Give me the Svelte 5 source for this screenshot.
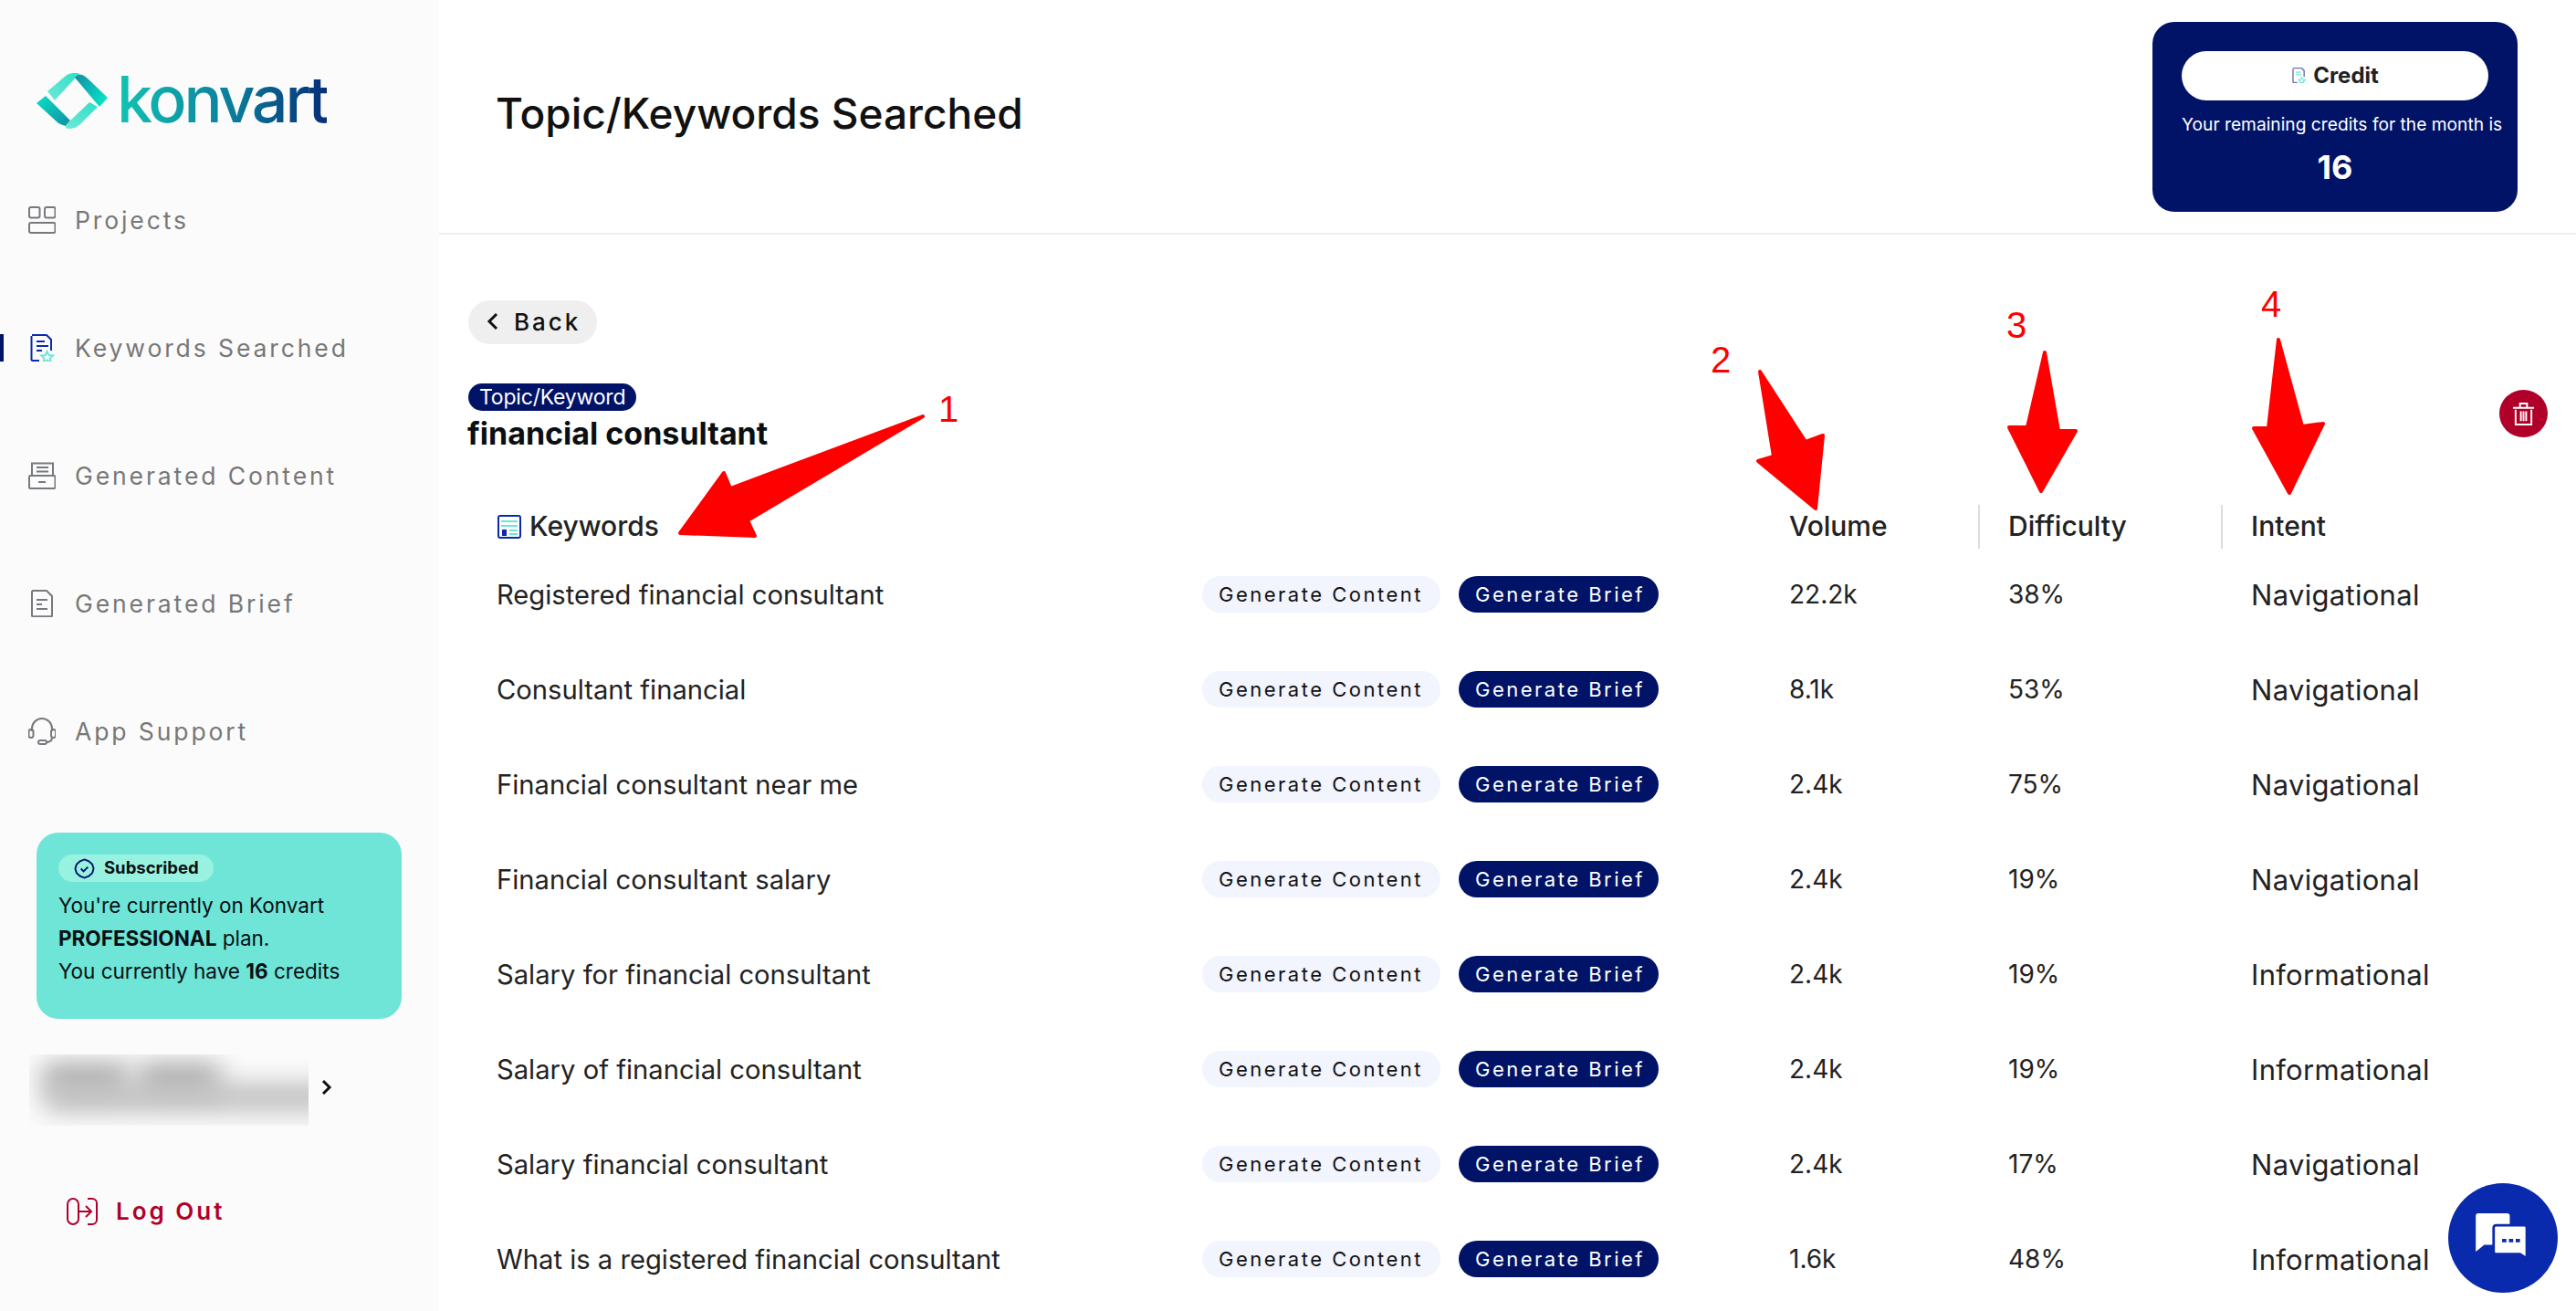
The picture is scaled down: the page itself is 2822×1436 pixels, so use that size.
<script>
  const rows = [
    ['Registered financial consultant', '22.2k', '38%', 'Navigational'],
    ['Consultant financial', '8.1k', '53%', 'Navigational'],
    ['Financial consultant near me', '2.4k', '75%', 'Navigational'],
    ['Financial consultant salary', '2.4k', '19%', 'Navigational'],
    ['Salary for financial consultant', '2.4k', '19%', 'Informational'],
    ['Salary of financial consultant', '2.4k', '19%', 'Informational'],
    ['Salary financial consultant', '2.4k', '17%', 'Navigational'],
    ['What is a registered financial consultant', '1.6k', '48%', 'Informational']
  ];
</script>

<div class="page">
  <aside class="side">
    <div class="logo">
      <svg class="mark" viewBox="40 80 78 62" width="78" height="62">
        <defs>
          <linearGradient id="ld1" x1="0" y1="0" x2="1" y2="0.6"><stop offset="0" stop-color="#0f8ea3"/><stop offset="1" stop-color="#0be0c6"/></linearGradient>
          <linearGradient id="ld2" x1="0" y1="0" x2="1" y2="1"><stop offset="0" stop-color="#0be0c6"/><stop offset="1" stop-color="#0f8ea3"/></linearGradient>
          <linearGradient id="ll" x1="0" y1="1" x2="1" y2="0"><stop offset="0" stop-color="#6fe8d6"/><stop offset="1" stop-color="#2fe0c8"/></linearGradient>
        </defs>
        <path d="M52 100 L72 83 Q78 79 84 80 L88 81 L82 86 L60 110 Z" fill="url(#ll)"/>
        <path d="M82 85 Q85 81 90 82 Q93 83 96 86 L118 107 L109 117 Z" fill="url(#ld1)"/>
        <path d="M40 113 L50 105 L77 132 L72 138 Q68 137 64 135 Z" fill="url(#ld2)"/>
        <path d="M98 112 L107 117 L88 136 Q80 143 72 140 L72 137 L77 132 Z" fill="url(#ll)"/>
      </svg>
      <span class="word">konvart</span>
    </div>

    <nav class="nav">
      <div class="item">
        <svg class="ico" viewBox="0 0 30 30"><g fill="none" stroke="#77797e" stroke-width="2"><rect x="1" y="1" width="11.500" height="11.500" rx="2"/><rect x="18" y="1" width="11.500" height="11.500" rx="2"/><rect x="1" y="18" width="28.500" height="11" rx="2"/></g></svg>
        <span>Projects</span>
      </div>
      <div class="item active">
        <svg class="ico" viewBox="0 0 30 30"><path d="M4 1h16l5 5v12M12 29H5a1.500 1.500 0 0 1-1.500-1.500V2" fill="none" stroke="#0a2aad" stroke-width="2"/><path d="M9 8h9M9 13h13M9 18h6" stroke="#0a2aad" stroke-width="2"/><path d="M20.500 19l2 4 4.500.5-3.300 3 1 4.300-4.200-2.300-4 2.300 1-4.300-3.300-3 4.500-.5z" fill="none" stroke="#6ee5d7" stroke-width="2"/></svg>
        <span>Keywords Searched</span>
      </div>
      <div class="item">
        <svg class="ico" viewBox="0 0 30 30"><g fill="none" stroke="#77797e" stroke-width="2"><path d="M4 15V1.500h23V15"/><rect x="1" y="15" width="28.500" height="14" rx="1.500"/><path d="M9 6h13M9 10.500h13M11 22h8"/></g></svg>
        <span>Generated Content</span>
      </div>
      <div class="item">
        <svg class="ico" viewBox="0 0 30 30"><g fill="none" stroke="#77797e" stroke-width="2"><path d="M5 1h15l6 6v21.500a.800.800 0 0 1-1 .8H5a1 1 0 0 1-1-1V2z"/><path d="M9 11h12M9 16h6M9 21h12"/></g></svg>
        <span>Generated Brief</span>
      </div>
      <div class="item">
        <svg class="ico" viewBox="0 0 30 30"><g fill="none" stroke="#77797e" stroke-width="2"><path d="M4 15v-3a11 11 0 0 1 22 0v3"/><rect x="0.500" y="13" width="5" height="9" rx="2.500"/><rect x="25" y="13" width="5" height="9" rx="2.500"/><path d="M26 22q0 5-7 5"/><rect x="11" y="25" width="9" height="4" rx="2"/></g></svg>
        <span>App Support</span>
      </div>
    </nav>

    <div class="plan">
      <div class="sub">
        <svg viewBox="0 0 24 24" width="23" height="23"><path d="M12 1.500l5 2 4 3.500 1.500 5-1.500 5-4 3.500-5 2-5-2-4-3.500-1.500-5 1.500-5 4-3.500z" fill="none" stroke="#011367" stroke-width="2"/><path d="M8 12l3 3 5-5" fill="none" stroke="#011367" stroke-width="2"/></svg>
        <b>Subscribed</b>
      </div>
      <p>You're currently on Konvart</p>
      <p><b>PROFESSIONAL</b> plan.</p>
      <p>You currently have <b>16</b> credits</p>
    </div>

    <div class="user">
      <div class="blur">
        <i class="b1"></i><i class="b2"></i><i class="b3"></i>
      </div>
      <svg class="chev" viewBox="0 0 12 18" width="12" height="18"><path d="M2 2l7 7-7 7" fill="none" stroke="#111" stroke-width="3"/></svg>
    </div>

    <div class="logout">
      <svg viewBox="0 0 34 30" width="34" height="30"><g fill="none" stroke="#b0002a" stroke-width="2"><rect x="1" y="1" width="12" height="28" rx="6"/><path d="M13 15h14M21 9l6 6-6 6"/><path d="M23 1h5a5 5 0 0 1 5 5v18a5 5 0 0 1-5 5h-5"/></g></svg>
      <span>Log Out</span>
    </div>
  </aside>

  <main class="main">
    <header class="head">
      <h1>Topic/Keywords Searched</h1>
      <div class="credit">
        <div class="cbtn">
          <svg viewBox="0 0 30 30" width="17" height="17"><path d="M4 1h16l5 5v12M12 29H5a1.500 1.500 0 0 1-1.500-1.500V2" fill="none" stroke="#6b76ad" stroke-width="2.500"/><path d="M9 9h9M9 14h11" stroke="#6ee5d7" stroke-width="2"/><path d="M20.500 19l2 4 4.500.5-3.300 3 1 4.300-4.200-2.300-4 2.300 1-4.300-3.300-3 4.500-.5z" fill="none" stroke="#6ee5d7" stroke-width="2"/></svg>
          <b>Credit</b>
        </div>
        <div class="ctext">Your remaining credits for the month is</div>
        <div class="cnum">16</div>
      </div>
    </header>

    <section class="content">
      <div class="back">
        <svg viewBox="0 0 13 20" width="13" height="20"><path d="M11 2l-8 8 8 8" fill="none" stroke="#111" stroke-width="3"/></svg>
        <span>Back</span>
      </div>

      <div class="topic">
        <div>
          <span class="tag">Topic/Keyword</span>
          <h2>financial consultant</h2>
        </div>
        <div class="trash">
          <svg viewBox="0 0 26 26" width="25" height="25"><g fill="none" stroke="#fff" stroke-width="2"><path d="M1 6h24M4 8v17h18V8M9 6V1h8v5M10 10v11M13 10v11M16 10v11"/></g></svg>
        </div>
      </div>

      <div class="table">
        <div class="tr th">
          <div class="kw">
            <svg viewBox="0 0 26 26" width="26" height="26"><rect x="1" y="1" width="24" height="24" rx="2" fill="#fff" stroke="#0a2aad" stroke-width="2"/><path d="M4 7h18M4 12h18M13 17h9M13 21h9" stroke="#6ee5d7" stroke-width="2"/><rect x="5" y="16" width="5" height="7" fill="#0a2aad"/></svg>
            <span>Keywords</span>
          </div>
          <div></div>
          <div class="c1">Volume</div>
          <div class="c2">Difficulty</div>
          <div class="c3">Intent</div>
        </div>
        {#each rows as r}
          <div class="tr">
            <div>{r[0]}</div>
            <div class="btns"><span class="gc">Generate Content</span><span class="gb">Generate Brief</span></div>
            <div class="c1 num-cell">{r[1]}</div>
            <div class="c2 num-cell">{r[2]}</div>
            <div class="c3 intent">{r[3]}</div>
          </div>
        {/each}
      </div>
    </section>
  </main>

  <svg class="marks" viewBox="0 0 2822 1436" width="2822" height="1436">
    <g fill="#ff0000" stroke="#ff0000" stroke-width="4" stroke-linejoin="round">
      <path d="M1011 456 L800 535 L793 518 L745 584 L827 587 L819 570 Z"/>
      <path d="M1928 407 L1943 500 L1926 505 L1989 557 L1997 477 L1978 484 Z"/>
      <path d="M2240 386 L2221 468 L2201 468 L2236 538 L2274 472 L2255 472 Z"/>
      <path d="M2496 372 L2485 469 L2469 469 L2508 540 L2545 464 L2522 467 Z"/>
    </g>
  </svg>
  <span class="num n1">1</span>
  <span class="num n2">2</span>
  <span class="num n3">3</span>
  <span class="num n4">4</span>

  <div class="chat">
    <svg viewBox="0 0 64 58" width="60" height="54"><path d="M3 0h34a3 3 0 0 1 3 3v34H10l-10 8V3a3 3 0 0 1 3-3z" fill="#fff"/><path d="M24 14h33a3 3 0 0 1 3 3v36l-8-5H24a3 3 0 0 1-3-3V17a3 3 0 0 1 3-3z" fill="#fff" stroke="#0a2aad" stroke-width="3"/><path d="M31 30h5v4h-5zM39 30h5v4h-5zM47 30h5v4h-5z" fill="#0a2aad"/></svg>
  </div>
</div>

<style>
  :global(body) { margin: 0; background: #fff; }
  .page {
    position: relative;
    display: flex;
    width: 2822px;
    height: 1436px;
    overflow: hidden;
    font-family: "Inter", "Lato", sans-serif;
    color: #222;
  }
  .side {
    width: 481px;
    flex: none;
    background: #fbfbfb;
    display: flex;
    flex-direction: column;
  }
  .logo {
    height: 171px;
    flex: none;
    display: flex;
    align-items: flex-start;
    padding: 80px 0 0 40px;
    box-sizing: border-box;
    gap: 10px;
  }
  .mark { display: block; flex: none; }
  .word {
    font-size: 70px;
    line-height: 58px;
    font-weight: 500;
    letter-spacing: -3.200px;
    background: linear-gradient(90deg, #12c4b4, #0a7d9c 55%, #062f78);
    -webkit-background-clip: text;
    background-clip: text;
    color: transparent;
  }
  .item {
    position: relative;
    height: 140px;
    display: flex;
    align-items: center;
    gap: 21px;
    padding-left: 31px;
    font-size: 26.500px;
    letter-spacing: 2.900px;
    color: #777;
  }
  .ico { width: 30px; height: 30px; flex: none; }
  .active::before {
    content: "";
    position: absolute;
    left: 0;
    top: 55px;
    width: 4px;
    height: 30px;
    background: #011367;
  }
  .plan {
    margin: 41px 0 0 40px;
    width: 400px;
    height: 204px;
    flex: none;
    box-sizing: border-box;
    padding: 24px 24px;
    background: #6ee5d7;
    border-radius: 24px;
    color: #0a0f14;
    font-size: 22.500px;
  }
  .plan p { margin: 0; line-height: 36px; white-space: nowrap; }
  .sub {
    width: 170px;
    height: 30px;
    box-sizing: border-box;
    padding-left: 17px;
    display: flex;
    align-items: center;
    gap: 10px;
    background: #98f2df;
    border-radius: 15px;
    font-size: 18.500px;
    margin-bottom: 8px;
  }
  .sub b { position: relative; top: -1px; }
  .user {
    margin: 39px 0 0 32px;
    display: flex;
    align-items: center;
    gap: 14px;
    flex: none;
  }
  .blur {
    position: relative;
    width: 306px;
    height: 78px;
    overflow: hidden;
    flex: none;
  }
  .blur i { position: absolute; filter: blur(14px); display: block; }
  .b1 { left: 16px; top: 10px; width: 92px; height: 32px; background: #a8a8a8; }
  .b2 { left: 120px; top: 10px; width: 88px; height: 32px; background: #a8a8a8; }
  .b3 { left: 18px; top: 32px; width: 320px; height: 30px; background: #bcbcbc; }
  .chev { margin-top: -6px; }
  .logout {
    margin: 78px 0 0 73px;
    display: flex;
    align-items: center;
    gap: 20px;
    color: #b0002a;
    font-size: 26px;
    font-weight: 600;
    letter-spacing: 3px;
    flex: none;
  }
  .main { flex: 1; display: flex; flex-direction: column; min-width: 0; }
  .head {
    height: 257px;
    flex: none;
    box-sizing: border-box;
    border-bottom: 2px solid #eee;
    display: flex;
    justify-content: space-between;
    align-items: flex-start;
    padding: 24px 64px 0 62px;
  }
  h1 {
    margin: 68px 0 0;
    font-size: 46px;
    line-height: 64px;
    font-weight: 500;
    color: #111;
  }
  .credit {
    width: 400px;
    height: 208px;
    box-sizing: border-box;
    padding: 32px 32px 0;
    background: #011367;
    border-radius: 24px;
    color: #fff;
  }
  .cbtn {
    height: 54px;
    box-sizing: border-box;
    padding-bottom: 2px;
    border-radius: 27px;
    background: #fff;
    color: #222;
    display: flex;
    align-items: center;
    justify-content: center;
    gap: 7px;
    font-size: 24px;
  }
  .ctext { margin-top: 13px; font-size: 19.200px; line-height: 26px; white-space: nowrap; }
  .cnum { text-align: center; font-size: 36px; font-weight: 700; line-height: 50px; margin-top: 9px; }
  .content { padding: 72px 31px 0 32px; }
  .back {
    width: 141px;
    height: 48px;
    box-sizing: border-box;
    padding: 0 0 2px 20px;
    display: flex;
    align-items: center;
    gap: 17px;
    background: #efefef;
    border-radius: 24px;
    font-size: 26px;
    font-weight: 500;
    letter-spacing: 3px;
    color: #111;
  }
  .topic {
    margin-top: 43px;
    height: 133px;
    display: flex;
    justify-content: space-between;
    align-items: flex-start;
  }
  .tag {
    display: inline-block;
    height: 30px;
    line-height: 30px;
    padding: 0 12px;
    border-radius: 15px;
    background: #011367;
    color: #fff;
    font-size: 23px;
    letter-spacing: -0.200px;
  }
  h2 {
    margin: 3px 0 0 -1px;
    font-size: 34px;
    line-height: 44px;
    font-weight: 700;
    color: #0a0f14;
  }
  .trash {
    width: 53px;
    height: 52px;
    margin-top: 7px;
    border-radius: 50%;
    background: #b0002a;
    display: flex;
    align-items: center;
    justify-content: center;
  }
  .table { margin-left: 31px; font-size: 29.200px; color: #222; }
  .tr {
    display: grid;
    grid-template-columns: 773px 643px 207px 266px 1fr;
    height: 58px;
    margin-bottom: 46px;
    align-items: center;
  }
  .th {
    height: 48px;
    margin-bottom: 21px;
    font-weight: 500;
    font-size: 30px;
    align-items: stretch;
  }
  .th > div { display: flex; align-items: center; box-sizing: border-box; padding-bottom: 3px; }
  .kw { padding-left: 1px; gap: 9px; }
  .kw svg { flex: none; margin-top: 3px; }
  .c2 { padding-left: 31px; border-left: 2px solid transparent; }
  .c3 { padding-left: 31px; border-left: 2px solid transparent; }
  .th .c2, .th .c3 { border-left-color: #ddd; }
  .num-cell { font-size: 28px; }
  .intent { font-size: 31px; letter-spacing: 0.300px; }
  .btns { display: flex; gap: 20px; }
  .gc, .gb {
    height: 40px;
    line-height: 40px;
    border-radius: 20px;
    font-size: 22px;
    letter-spacing: 2.500px;
    white-space: nowrap;
    box-sizing: border-box;
  }
  .gc { width: 261px; padding-left: 18px; background: #f2f4fe; color: #111; }
  .gb { width: 219px; padding-left: 18px; background: #011367; color: #fff; }
  .marks { position: absolute; left: 0; top: 0; pointer-events: none; }
  .num {
    position: absolute;
    font-family: "Liberation Sans", sans-serif;
    font-size: 40px;
    line-height: 40px;
    color: #ff0000;
  }
  .n1 { left: 1028px; top: 428px; }
  .n2 { left: 1874px; top: 374px; }
  .n3 { left: 2198px; top: 336px; }
  .n4 { left: 2477px; top: 313px; }
  .chat {
    position: absolute;
    left: 2682px;
    top: 1296px;
    width: 120px;
    height: 120px;
    border-radius: 50%;
    background: #0a2aad;
    display: flex;
    align-items: center;
    justify-content: center;
  }
</style>
